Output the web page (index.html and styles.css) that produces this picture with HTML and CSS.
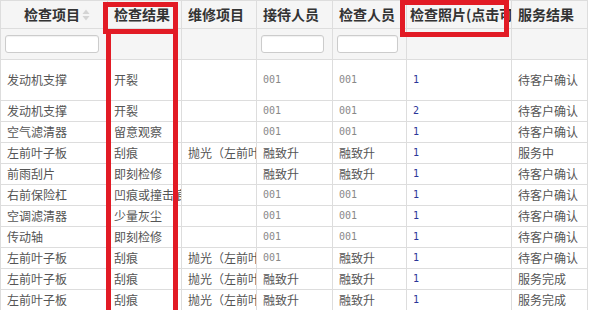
FILE: index.html
```html
<!DOCTYPE html>
<html>
<head>
<meta charset="utf-8">
<link rel="stylesheet" href="styles.css">
</head>
<body>
<div class="wrap">
<table class="grid">
  <colgroup>
    <col style="width:107px"><col style="width:74px"><col style="width:75px"><col style="width:76px"><col style="width:74px"><col style="width:105px"><col style="width:76px">
  </colgroup>
  <thead>
    <tr class="head">
      <th><div class="th-inner sortable">检查项目<svg class="sort" width="8" height="12" viewBox="0 0 8 12"><path d="M4 0.5 L7.5 5 L0.5 5 Z" fill="#d4d4d4"/><path d="M4 11.5 L7.5 7 L0.5 7 Z" fill="#d4d4d4"/></svg></div></th>
      <th><div class="th-inner">检查结果</div></th>
      <th><div class="th-inner">维修项目</div></th>
      <th><div class="th-inner">接待人员</div></th>
      <th><div class="th-inner">检查人员</div></th>
      <th><div class="th-inner tight">检查照片(点击可查看)</div></th>
      <th><div class="th-inner">服务结果</div></th>
    </tr>
    <tr class="filter">
      <th><input class="fi" type="text"></th>
      <th></th>
      <th></th>
      <th><input class="fi" type="text"></th>
      <th><input class="fi" type="text"></th>
      <th></th>
      <th></th>
    </tr>
  </thead>
  <tbody>
    <tr class="tall"><td>发动机支撑</td><td>开裂</td><td></td><td class="num">001</td><td class="num">001</td><td class="lnk">1</td><td>待客户确认</td></tr>
    <tr><td>发动机支撑</td><td>开裂</td><td></td><td class="num">001</td><td class="num">001</td><td class="lnk">2</td><td>待客户确认</td></tr>
    <tr><td>空气滤清器</td><td>留意观察</td><td></td><td class="num">001</td><td class="num">001</td><td class="lnk">1</td><td>待客户确认</td></tr>
    <tr><td>左前叶子板</td><td>刮痕</td><td>抛光（左前叶子板）</td><td>融致升</td><td>融致升</td><td class="lnk">1</td><td>服务中</td></tr>
    <tr><td>前雨刮片</td><td>即刻检修</td><td></td><td>融致升</td><td>融致升</td><td class="lnk">1</td><td>待客户确认</td></tr>
    <tr><td>右前保险杠</td><td>凹痕或撞击痕</td><td></td><td class="num">001</td><td class="num">001</td><td class="lnk">1</td><td>待客户确认</td></tr>
    <tr><td>空调滤清器</td><td>少量灰尘</td><td></td><td class="num">001</td><td class="num">001</td><td class="lnk">1</td><td>待客户确认</td></tr>
    <tr><td>传动轴</td><td>即刻检修</td><td></td><td class="num">001</td><td class="num">001</td><td class="lnk">1</td><td>待客户确认</td></tr>
    <tr><td>左前叶子板</td><td>刮痕</td><td>抛光（左前叶子板）</td><td class="num">001</td><td>融致升</td><td class="lnk">1</td><td>待客户确认</td></tr>
    <tr><td>左前叶子板</td><td>刮痕</td><td>抛光（左前叶子板）</td><td>融致升</td><td>融致升</td><td class="lnk">1</td><td>服务完成</td></tr>
    <tr><td>左前叶子板</td><td>刮痕</td><td>抛光（左前叶子板）</td><td>融致升</td><td>融致升</td><td class="lnk">1</td><td>服务完成</td></tr>
  </tbody>
</table>
<div class="mark mark-head"></div>
<div class="mark mark-col"></div>
<div class="mark mark-photo"></div>
</div>
</body>
</html>
```
FILE: styles.css
```css
html, body {
  margin: 0;
  padding: 0;
  background: #fff;
  overflow: hidden;
}
.wrap {
  position: relative;
  width: 591px;
  height: 310px;
  overflow: hidden;
}
.grid {
  border-collapse: collapse;
  table-layout: fixed;
  width: 587px;
  font-family: "Noto Sans CJK SC", sans-serif;
}
.grid th, .grid td {
  border: 1px solid #dddddd;
  padding: 0 0 0 6px;
  white-space: nowrap;
  overflow: hidden;
  text-align: left;
}
.grid th {
  background: #f5f5f5;
  font-size: 14px;
  font-weight: bold;
  color: #333;
}
.grid .head th {
  height: 27px;
  padding: 0;
}
.th-inner {
  height: 27px;
  line-height: 27px;
  padding-left: 6px;
  overflow: hidden;
  white-space: nowrap;
}
.th-inner.sortable {
  padding-left: 23px;
}
.th-inner.tight {
  padding-left: 3px;
}
.sort {
  vertical-align: -1px;
  margin-left: 2px;
}
.grid .filter th {
  height: 30px;
  padding-left: 4px;
}
.fi {
  display: block;
  box-sizing: border-box;
  width: calc(100% - 8px);
  height: 18px;
  margin: 0;
  border: 1px solid #cccccc;
  border-radius: 3px;
  background: #fff;
  box-shadow: inset 0 1px 1px rgba(0,0,0,0.06);
}
.grid td {
  height: 20px;
  font-size: 12px;
  line-height: 20px;
  color: #555;
}
.grid tr.tall td {
  height: 40px;
}
.grid td.num {
  font-family: "DejaVu Sans Mono", monospace;
  font-size: 10px;
  color: #888;
}
.grid td.lnk {
  font-family: "DejaVu Sans Mono", monospace;
  font-size: 10px;
  color: #2a3598;
}
.mark {
  position: absolute;
  box-sizing: border-box;
  border: 5px solid #e21b25;
}
.mark-head {
  left: 103px;
  top: 2px;
  width: 75px;
  height: 32px;
}
.mark-col {
  left: 106px;
  top: 29px;
  width: 72px;
  height: 290px;
  border-top: 0;
}
.mark-photo {
  left: 400px;
  top: 0;
  width: 109px;
  height: 37px;
}
```
